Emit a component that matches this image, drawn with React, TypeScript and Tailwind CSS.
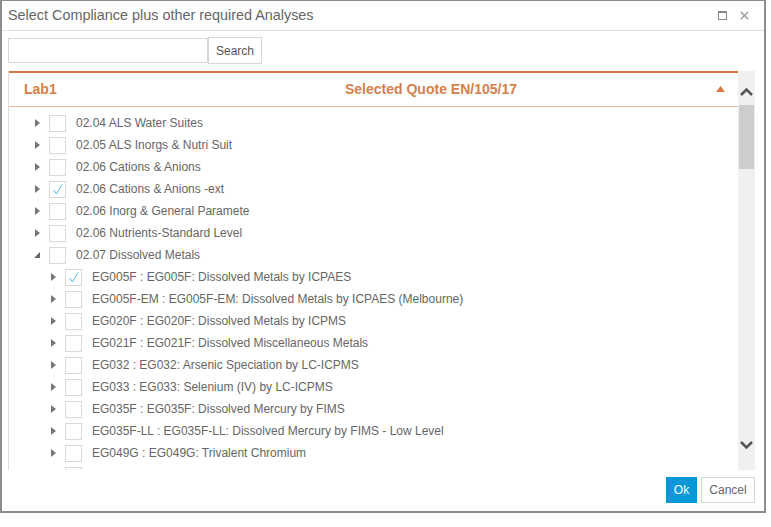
import { X } from 'lucide-react'

type Row = { label: string; level: number; checked?: boolean; open?: boolean }

const rows: Row[] = [
  { label: '02.04 ALS Water Suites', level: 0 },
  { label: '02.05 ALS Inorgs & Nutri Suit', level: 0 },
  { label: '02.06 Cations & Anions', level: 0 },
  { label: '02.06 Cations & Anions -ext', level: 0, checked: true },
  { label: '02.06 Inorg & General Paramete', level: 0 },
  { label: '02.06 Nutrients-Standard Level', level: 0 },
  { label: '02.07 Dissolved Metals', level: 0, open: true },
  { label: 'EG005F : EG005F: Dissolved Metals by ICPAES', level: 1, checked: true },
  { label: 'EG005F-EM : EG005F-EM: Dissolved Metals by ICPAES (Melbourne)', level: 1 },
  { label: 'EG020F : EG020F: Dissolved Metals by ICPMS', level: 1 },
  { label: 'EG021F : EG021F: Dissolved Miscellaneous Metals', level: 1 },
  { label: 'EG032 : EG032: Arsenic Speciation by LC-ICPMS', level: 1 },
  { label: 'EG033 : EG033: Selenium (IV) by LC-ICPMS', level: 1 },
  { label: 'EG035F : EG035F: Dissolved Mercury by FIMS', level: 1 },
  { label: 'EG035F-LL : EG035F-LL: Dissolved Mercury by FIMS - Low Level', level: 1 },
  { label: 'EG049G : EG049G: Trivalent Chromium', level: 1 },
  { label: 'EG050F : EG050F: Dissolved Hexavalent Chromium', level: 1 },
]

function Arrow({ open }: { open?: boolean }) {
  return (
    <svg width="8" height="8" viewBox="0 0 8 8" className="shrink-0">
      {open ? <polygon points="6,1 6,7 0,7" fill="#666" /> : <polygon points="1,0 6,4 1,8" fill="#777" />}
    </svg>
  )
}

function Check({ checked }: { checked?: boolean }) {
  return (
    <div className="w-[17px] h-[17px] border border-[#d9d9d9] bg-white flex items-center justify-center shrink-0">
      {checked && (
        <svg width="13" height="13" viewBox="0 0 13 13">
          <path d="M2.5 7 L5.5 11 L11 1.5" fill="none" stroke="#5ab4e6" strokeWidth="1" />
        </svg>
      )}
    </div>
  )
}

export default function App() {
  return (
    <div className="w-[771px] h-[527px] bg-white relative font-['Liberation_Sans',Arial,sans-serif]">
      <div className="w-[766px] h-[513px] border-x-2 border-b-2 border-t border-[#8c8c8c] bg-white flex flex-col">
        {/* title bar */}
        <div className="h-[30px] shrink-0 border-b border-[#dedede] flex items-center pl-[6px] pr-[13px]">
          <span className="text-[14.4px] text-[#666] flex-1">Select Compliance plus other required Analyses</span>
          <div className="w-[9px] h-[9px] border border-[#888] border-t-2 mr-[11px]" />
          <X size={13} strokeWidth={2.5} className="text-[#999]" />
        </div>

        {/* search */}
        <div className="flex items-start pl-[6px] pt-[6px] h-[40px] shrink-0">
          <input className="w-[200px] h-[25px] mt-[1px] border border-[#d6d6d6] outline-none" />
          <button className="h-[27px] px-[7px] border border-[#d6d6d6] text-[12px] text-[#555] bg-white">Search</button>
        </div>

        {/* panel + scrollbar */}
        <div className="flex ml-[6px] mr-[9px] h-[399px] shrink-0">
          <div className="flex-1 border-l border-[#ddd] overflow-hidden flex flex-col">
            <div className="h-[2px] bg-[#d47a40] shrink-0" />
            <div className="h-[34px] shrink-0 flex items-center px-[15px] border-b border-[#e9b896]">
              <span className="text-[14px] font-bold text-[#d6804a] w-[321px]">Lab1</span>
              <span className="text-[14px] font-bold text-[#d6804a] flex-1">Selected Quote EN/105/17</span>
              <svg width="9" height="6" viewBox="0 0 9 6" className="mr-[-2px] mb-[2px]">
                <polygon points="4.5,0 9,6 0,6" fill="#d47a40" />
              </svg>
            </div>
            <div className="pt-[5px] shrink-0">
              {rows.map((r, i) => (
                <div key={i} className={`h-[22px] flex items-center ${r.level === 0 ? 'pl-[25px]' : 'pl-[41px]'}`}>
                  <div className="w-[15px] flex items-center">
                    <Arrow open={r.open} />
                  </div>
                  <Check checked={r.checked} />
                  <span className="ml-[10px] text-[12px] text-[#666] whitespace-nowrap">{r.label}</span>
                </div>
              ))}
            </div>
          </div>
          <div className="w-[17px] bg-[#f0f0f0] flex flex-col items-center">
            <svg width="17" height="20" viewBox="0 0 17 20" className="mt-[9px]">
              <path d="M3 15 L8.5 9.5 L14 15" fill="none" stroke="#555" strokeWidth="2.5" />
            </svg>
            <div className="w-[15px] h-[64px] bg-[#cdcdcd] mt-[5px]" />
            <div className="flex-1" />
            <svg width="17" height="20" viewBox="0 0 17 20" className="mb-[13px]">
              <path d="M3 5 L8.5 10.5 L14 5" fill="none" stroke="#555" strokeWidth="2.5" />
            </svg>
          </div>
        </div>

        {/* footer */}
        <div className="flex justify-end items-start pt-[7px] pr-[9px] gap-[4px]">
          <button className="w-[31px] h-[26px] bg-[#0898d8] text-white text-[12px]">Ok</button>
          <button className="w-[54px] h-[26px] border border-[#d6d6d6] bg-white text-[#666] text-[12px]">Cancel</button>
        </div>
      </div>
    </div>
  )
}
